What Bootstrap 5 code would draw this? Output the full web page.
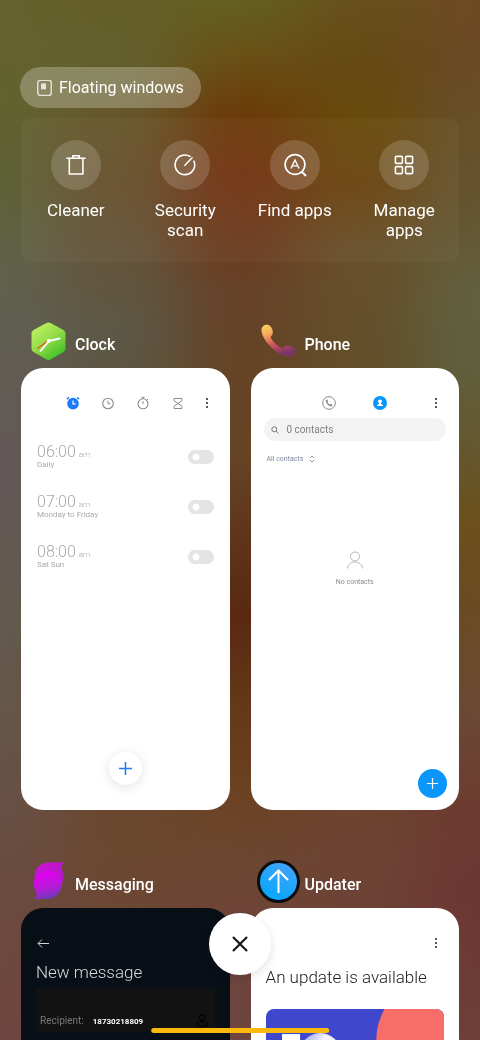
<!DOCTYPE html>
<html lang="en">
<head>
<meta charset="utf-8">
<meta name="viewport" content="width=device-width, initial-scale=1">
<title>Recent apps</title>
<link href="https://cdn.jsdelivr.net/npm/bootstrap@5.3.0/dist/css/bootstrap.min.css" rel="stylesheet">
<style>
  body { font-family: Roboto, "Noto Sans", sans-serif; background: #67503a; }
  button { font-family: inherit; }
  svg { display: block; flex: none; }

  /* Wallpaper: five vertical colour runs, each fading in over the one to its left */
  .wall { z-index: -1; }
  .wall-1 { background: linear-gradient(#66622d 0, #62632f 10%, #5f6236 17%, #60624b 26%, #625e54 34%, #64595a 45%, #635b50 58%, #65574a 68%, #685044 78%, #6b4a40 87%, #6f463f); }
  .wall-2 { background: linear-gradient(#645f28 0, #63602e 7%, #67552a 12%, #68502e 18%, #64543c 25%, #5c5845 32%, #67482c 60%, #6b4830 82%, #6e4540); }
  .wall-3 { background: linear-gradient(#645f21 0, #695218 5%, #6c3b0a 11%, #733412 17%, #6e3a1b 22%, #66422a 28%, #654426 36%, #664425 44%, #5f341a 52%, #5a2812 59%, #643818 68%, #6b4222 76%, #6c4630 82%, #6f443b 90%, #6e4540); }
  .wall-4 { background: linear-gradient(#68501c 0, #654a14 6%, #684a0c 12%, #6a4511 18%, #68502a 24%, #644f2a 33%, #6a4423 65%, #6d4434 82%, #6e3d36); }
  .wall-5 { background: linear-gradient(#6e4a23 0, #6a4a25 6%, #675028 12%, #655531 20%, #626040 28%, #5f6040 34%, #65582f 43%, #6b501c 50%, #6a4c22 58%, #6a4a35 68%, #6d3a30 78%, #6d3733 86%, #6d3f39); }
  .wall-2 { --from: 0%; }
  .wall-3 { --from: 25%; }
  .wall-4 { --from: 50%; }
  .wall-5 { --from: 75%; }
  .wall-fade {
    --fade: linear-gradient(90deg, transparent var(--from), rgba(0,0,0,.1) calc(var(--from) + 5%), rgba(0,0,0,.35) calc(var(--from) + 10%), rgba(0,0,0,.65) calc(var(--from) + 15%), rgba(0,0,0,.9) calc(var(--from) + 20%), #000 calc(var(--from) + 25%));
    -webkit-mask-image: var(--fade); mask-image: var(--fade);
  }

  .recents { padding: 67px 21px 0; }
  .pill { height: 41px; margin-left: -1px; padding: 1px 17px 0; gap: 7px; background: rgba(255,255,255,.25); color: #fff; font-size: 16px; line-height: 20px; }
  .tools { margin-top: 10px; padding: 22px 0; border-radius: 10px; background: rgba(255,255,255,.035); }
  .tool { color: #fff; font-size: 17px; line-height: 20px; gap: 10px; min-height: 100px; }
  .disc { width: 50px; height: 50px; background: rgba(255,255,255,.16); }
  .tool-name { max-width: 80px; }

  .apps { display: grid; grid-template-columns: 1fr 1fr; column-gap: 21px; row-gap: 49px; margin-top: 57px; }
  .app-head { height: 44px; margin-bottom: 5px; padding-left: 6px; gap: 4px; }
  .app-title { margin: 0; padding-top: 8px; font-size: 16px; line-height: 20px; font-weight: 500; color: #fff; }
  .shot { aspect-ratio: 33 / 70; border-radius: 22px; background: #fff; overflow: hidden; }
  .shot-bar { padding: 25px 12px 0 0; }
  .tab-btn { height: 20px; }
  .tab-clock { width: 35px; }
  .tab-phone { width: 51px; }
  .more { width: 22px; height: 20px; }
  .more-gap { margin-left: 20px; }

  .alarms { margin: 19px 16px 0; }
  .alarm { height: 50px; color: #a9a9a9; }
  .alarm-time { font-size: 16px; line-height: 16px; font-weight: 300; }
  .tiny { font-size: 8px; line-height: 10px; }
  .am { margin-left: 1px; }
  .toggle { appearance: none; width: 26px; height: 14px; margin: 0; border-radius: 7px; background: #e4e4e4 radial-gradient(circle at 8px 7px, #fff 3px, transparent 4px); }
  .fab { width: 33px; height: 33px; background: #fff; }
  .fab-clock { margin-bottom: 25px; box-shadow: 0 2px 12px rgba(0,0,0,.12); }
  .fab-phone { width: 29px; height: 29px; margin: 0 12px 12px 0; background: #0b96fb; }

  .search { height: 23px; margin: 5px 13px 0; padding: 1px 7px 0; gap: 8px; background: #f3f3f3; }
  .search input { font-size: 10px; line-height: 12px; color: #777; outline: 0; }
  .search input::placeholder { color: #808080; opacity: 1; }
  .filter { margin: 13px 0 0 16px; gap: 6px; font-size: 7px; line-height: 10px; color: #8288a0; }
  .empty { margin-top: 87px; gap: 8px; font-size: 7px; line-height: 10px; color: #8a8a8a; }

  .shot-dark { background: #080f17; color: #d8dadc; }
  .back { margin: 29px 0 0 16px; }
  .page-name { margin: 11px 0 0 15px; font-size: 17px; line-height: 22px; font-weight: 300; }
  .message { height: 43px; margin: 6px 15px 0; padding: 0 7px 5px 4px; gap: 9px; background: #121212; font-size: 10px; line-height: 12px; color: #777; }
  .message input { font-size: 8px; line-height: 10px; font-weight: 700; color: #fff; outline: 0; }
  .update-name { margin-top: 13px; color: #222; }
  .banner { margin: 21px 15px 0; border-radius: 8px; }
  .banner svg { width: 100%; height: auto; }

  .close-all { bottom: 65px; width: 62px; height: 62px; background: #fff; box-shadow: 0 3px 10px rgba(0,0,0,.12); }
  .home-bar { bottom: 7px; width: 37%; height: 5px; background: #fbb90d; }
</style>
<script src="https://cdn.jsdelivr.net/npm/bootstrap@5.3.0/dist/js/bootstrap.bundle.min.js"></script>
</head>
<body class="vh-100 overflow-hidden">
<div class="wall wall-1 position-fixed top-0 start-0 w-100 h-100"></div>
<div class="wall wall-fade wall-2 position-fixed top-0 start-0 w-100 h-100"></div>
<div class="wall wall-fade wall-3 position-fixed top-0 start-0 w-100 h-100"></div>
<div class="wall wall-fade wall-4 position-fixed top-0 start-0 w-100 h-100"></div>
<div class="wall wall-fade wall-5 position-fixed top-0 start-0 w-100 h-100"></div>

<main class="recents">
  <button type="button" class="pill border-0 rounded-pill d-inline-flex align-items-center">
    <svg width="15" height="17" viewBox="0 0 15 17" fill="none" stroke="#e6e4da" stroke-width="1.4"><rect x=".8" y=".2" width="13.400" height="15.200" rx="2.5"/><rect x="4" y="3.400" width="5" height="6" fill="#e6e4da" stroke="none"/></svg>
    Floating windows
  </button>

  <section class="tools row g-0">
    <div class="col-3"><button type="button" class="tool w-100 p-0 border-0 bg-transparent d-flex flex-column align-items-center">
      <span class="disc rounded-circle d-flex align-items-center justify-content-center"><svg width="26" height="26" viewBox="0 0 26 26" fill="none" stroke="#fff" stroke-width="1.6"><path d="M4 6.300h18M6.300 6.500v15.500h13.600V6.500M9.900 6V3.700h6.400V6" stroke-linejoin="round" stroke-linecap="round"/></svg></span>
      <span class="tool-name">Cleaner</span></button></div>
    <div class="col-3"><button type="button" class="tool w-100 p-0 border-0 bg-transparent d-flex flex-column align-items-center">
      <span class="disc rounded-circle d-flex align-items-center justify-content-center"><svg width="26" height="26" viewBox="0 0 26 26" fill="none" stroke="#fff" stroke-width="1.600" stroke-linecap="round"><path d="M22 9.200A9.800 9.800 0 1 1 17.900 4.400M12.900 13.300l7.200-7.500"/></svg></span>
      <span class="tool-name">Security scan</span></button></div>
    <div class="col-3"><button type="button" class="tool w-100 p-0 border-0 bg-transparent d-flex flex-column align-items-center">
      <span class="disc rounded-circle d-flex align-items-center justify-content-center"><svg width="26" height="26" viewBox="0 0 26 26" fill="none" stroke="#fff" stroke-width="1.700"><circle cx="13" cy="12.500" r="9.900"/><path d="M19.500 19.500l4.500 4.500" stroke-width="2"/><path d="M8.900 16.500L13 8l4.100 8.500M10.200 13.900h5.600" stroke-width="1.400"/></svg></span>
      <span class="text-nowrap">Find apps</span></button></div>
    <div class="col-3"><button type="button" class="tool w-100 p-0 border-0 bg-transparent d-flex flex-column align-items-center">
      <span class="disc rounded-circle d-flex align-items-center justify-content-center"><svg width="26" height="26" viewBox="0 0 26 26" fill="none" stroke="#fff" stroke-width="1.600"><rect x="4.400" y="4.400" width="7" height="7" rx="1"/><rect x="14.600" y="4.400" width="7" height="7" rx="1"/><rect x="4.400" y="14.600" width="7" height="7" rx="1"/><rect x="14.600" y="14.600" width="7" height="7" rx="1"/></svg></span>
      <span class="tool-name">Manage apps</span></button></div>
  </section>

  <section class="apps">
    <article>
      <header class="app-head d-flex align-items-center">
        <svg width="44" height="44" viewBox="0 0 44 44"><defs><linearGradient id="gc" x1=".1" y1="0" x2=".8" y2="1"><stop offset="0" stop-color="#c8f46a"/><stop offset=".5" stop-color="#93dc48"/><stop offset="1" stop-color="#37bd22"/></linearGradient></defs><path d="M19.500 4q2-1.200 4 0l13 7q2 1.200 2 3.300v15.400q0 2.100-2 3.300l-13 7.400q-2 1.200-4 0l-13-7.400q-2-1.200-2-3.300V14.300q0-2.100 2-3.300z" fill="url(#gc)"/><path d="M21.500 21.500l-11 8" stroke="#f0502c" stroke-width="1.300"/><path d="M22 22l-8.500 10M22 22l10.500-2.500" stroke="#fff" stroke-width="1.900" stroke-linecap="round"/><circle cx="21.700" cy="22" r="1.900" fill="#fff"/></svg>
        <h2 class="app-title">Clock</h2>
      </header>
      <div class="shot d-flex flex-column">
        <nav class="shot-bar d-flex justify-content-end">
          <button type="button" aria-label="Alarm" class="tab-btn tab-clock p-0 border-0 bg-transparent d-flex align-items-center justify-content-center"><svg width="14" height="14" viewBox="0 0 14 14"><circle cx="7" cy="7.600" r="5.800" fill="#1a7af8"/><path d="M.9 3.200l2-2M13.100 3.200l-2-2" stroke="#1a7af8" stroke-width="1.300"/><path d="M7 4.500v3.300h2.700" fill="none" stroke="#fff" stroke-width="1.200"/></svg></button>
          <button type="button" aria-label="World clock" class="tab-btn tab-clock p-0 border-0 bg-transparent d-flex align-items-center justify-content-center"><svg width="14" height="14" viewBox="0 0 14 14" fill="none" stroke="#8c8c8c"><circle cx="7" cy="7.500" r="5.300" stroke-width="1.100"/><path d="M7 4.700v3h2.500"/></svg></button>
          <button type="button" aria-label="Stopwatch" class="tab-btn tab-clock p-0 border-0 bg-transparent d-flex align-items-center justify-content-center"><svg width="14" height="14" viewBox="0 0 14 14" fill="none" stroke="#8c8c8c"><circle cx="7" cy="7.800" r="5" stroke-width="1.100"/><path d="M7 5v3M5.500 1.400h3M11 3l1 1M7 1.400v1.400"/></svg></button>
          <button type="button" aria-label="Timer" class="tab-btn tab-clock p-0 border-0 bg-transparent d-flex align-items-center justify-content-center"><svg width="14" height="14" viewBox="0 0 14 14" fill="none" stroke="#8c8c8c"><path d="M3 2.500h8v2.200L3 10.300v2.200h8v-2.200L3 4.700z" stroke-linejoin="round"/></svg></button>
          <button type="button" aria-label="More" class="more p-0 border-0 bg-transparent d-flex align-items-center justify-content-center"><svg width="4" height="12" viewBox="0 0 4 12" fill="#222"><circle cx="2" cy="2" r="1"/><circle cx="2" cy="6" r="1"/><circle cx="2" cy="10" r="1"/></svg></button>
        </nav>
        <div class="alarms">
          <label class="alarm d-flex align-items-center justify-content-between"><span><span class="alarm-time d-block">06:00<span class="tiny am"> am</span></span><span class="tiny d-block">Daily</span></span><input type="checkbox" class="toggle"></label>
          <label class="alarm d-flex align-items-center justify-content-between"><span><span class="alarm-time d-block">07:00<span class="tiny am"> am</span></span><span class="tiny d-block">Monday to Friday</span></span><input type="checkbox" class="toggle"></label>
          <label class="alarm d-flex align-items-center justify-content-between"><span><span class="alarm-time d-block">08:00<span class="tiny am"> am</span></span><span class="tiny d-block">Sat Sun</span></span><input type="checkbox" class="toggle"></label>
        </div>
        <button type="button" aria-label="Add alarm" class="fab fab-clock mt-auto align-self-center p-0 border-0 rounded-circle d-flex align-items-center justify-content-center"><svg width="13" height="13" viewBox="0 0 13 13" stroke="#1a7af8" stroke-width="1.500"><path d="M6.500 0v13M0 6.500h13"/></svg></button>
      </div>
    </article>

    <article>
      <header class="app-head d-flex align-items-center">
        <svg width="44" height="44" viewBox="0 0 44 44"><defs><linearGradient id="gp" x1="0" y1="0" x2=".35" y2="1"><stop offset="0" stop-color="#fcd860"/><stop offset=".35" stop-color="#f2a45c"/><stop offset=".65" stop-color="#cf5560"/><stop offset="1" stop-color="#7d3568"/></linearGradient></defs><path d="M4.500 11C4.500 7.500 7.500 5.500 10.500 5.800c3.500.5 5.500 4.500 5.300 8.400-.1 1.800-1.600 2.300-2 3.600-.5 2.700 7.300 10.200 11.200 11.200 1.700.4 2.400-1.800 4-2.300 2.600-.8 7 1 9.300 3.200.9 1 .6 3-.3 4.400-1.700 2.300-5.800 3.600-9.200 3C19.500 35.500 4.500 21 4.500 11z" fill="url(#gp)"/></svg>
        <h2 class="app-title">Phone</h2>
      </header>
      <div class="shot d-flex flex-column">
        <nav class="shot-bar d-flex justify-content-end">
          <button type="button" aria-label="Recents" class="tab-btn tab-phone p-0 border-0 bg-transparent d-flex align-items-center justify-content-center"><svg width="14" height="14" viewBox="0 0 14 14"><circle cx="7" cy="7" r="6.300" fill="none" stroke="#888"/><path d="M3.800 4.400c.3-.9 1.300-1.200 1.800-.4.5.9.2 1.400-.1 1.900.4 1.200 1.400 2.100 2.500 2.600.6-.4 1.300-.6 2 0 .8.700.3 1.500-.5 1.800C7 10.500 3.700 7 3.800 4.400z" fill="#888"/></svg></button>
          <button type="button" aria-label="Contacts" class="tab-btn tab-phone p-0 border-0 bg-transparent d-flex align-items-center justify-content-center"><svg width="14" height="14" viewBox="0 0 14 14"><circle cx="7" cy="7" r="7" fill="#0b96fb"/><path d="M7 3.400c1.200 0 1.900.8 1.900 1.800 0 .9-.5 1.500-.9 1.900v.8c1 .3 2 .7 2 2H4c0-1.300 1-1.700 2-2v-.8c-.4-.4-.9-1-.9-1.900 0-1 .7-1.800 1.900-1.800z" fill="#fff"/></svg></button>
          <button type="button" aria-label="More" class="more more-gap p-0 border-0 bg-transparent d-flex align-items-center justify-content-center"><svg width="4" height="12" viewBox="0 0 4 12" fill="#222"><circle cx="2" cy="2" r="1"/><circle cx="2" cy="6" r="1"/><circle cx="2" cy="10" r="1"/></svg></button>
        </nav>
        <div class="search rounded-pill d-flex align-items-center">
          <svg width="8" height="8" viewBox="0 0 8 8" fill="none" stroke="#777"><circle cx="3.300" cy="3.300" r="2.500"/><path d="M5.200 5.200l2.400 2.400"/></svg>
          <input type="search" aria-label="Search contacts" placeholder="0 contacts" class="p-0 border-0 bg-transparent flex-fill">
        </div>
        <button type="button" class="filter p-0 border-0 bg-transparent align-self-start d-flex align-items-center">All contacts <svg width="6" height="8" viewBox="0 0 6 8" fill="none" stroke="#8288a0" stroke-width=".9"><path d="M1 3l2-2 2 2M1 5l2 2 2-2"/></svg></button>
        <div class="empty d-flex flex-column align-items-center">
          <svg width="18" height="18" viewBox="0 0 18 18" fill="none" stroke="#b5b5b5"><circle cx="9" cy="5.500" r="4.500"/><path d="M1.500 17.500c.3-4 3.500-6.500 7.500-6.500s7.200 2.500 7.500 6.500"/></svg>
          No contacts
        </div>
        <button type="button" aria-label="Add contact" class="fab fab-phone mt-auto align-self-end p-0 border-0 rounded-circle d-flex align-items-center justify-content-center"><svg width="11" height="11" viewBox="0 0 11 11" stroke="#fff" stroke-width="1.200"><path d="M5.500 0v11M0 5.500h11"/></svg></button>
      </div>
    </article>

    <article>
      <header class="app-head d-flex align-items-center">
        <svg width="44" height="44" viewBox="0 0 44 44"><defs><linearGradient id="gm" x1=".3" y1="0" x2=".6" y2="1"><stop offset="0" stop-color="#d010d8"/><stop offset="1" stop-color="#9a22b4"/></linearGradient><linearGradient id="gn" x1=".4" y1=".1" x2=".65" y2="1"><stop offset="0" stop-color="#e000f0"/><stop offset=".5" stop-color="#b81ad8"/><stop offset="1" stop-color="#6a3cb4"/></linearGradient></defs><path d="M37 3.500H22C12 4 7.500 10 7.500 18s5 15 13 15 16.500-7 16.500-16c0-4-2.500-6-2.500-8.500 0-2 1-3.500 2.500-5z" fill="url(#gm)"/><path d="M7 40h14c8.500-.5 14-8 14-15.500C35 17 29 12 21.500 12S6.500 18 6.500 25c0 4.500 3 7 3 10 0 2-1 3.500-2.500 5z" fill="url(#gn)"/></svg>
        <h2 class="app-title">Messaging</h2>
      </header>
      <div class="shot shot-dark d-flex flex-column">
        <button type="button" aria-label="Back" class="back p-0 border-0 bg-transparent align-self-start"><svg width="13" height="13" viewBox="0 0 13 13" fill="none" stroke="#d0d2d4"><path d="M12 6.500H1.200M5 2.500l-4 4 4 4"/></svg></button>
        <h3 class="page-name">New message</h3>
        <div class="message d-flex align-items-end">
          <label for="to">Recipient:</label>
          <input id="to" type="text" value="18730218809" class="p-0 border-0 bg-transparent flex-fill w-25">
          <svg width="12" height="13" viewBox="0 0 12 13" fill="none" stroke="#000" stroke-width="1.200"><circle cx="6" cy="3.600" r="2.800"/><rect x=".8" y="8" width="10.400" height="4" rx="2"/></svg>
        </div>
      </div>
    </article>

    <article>
      <header class="app-head d-flex align-items-center">
        <svg width="44" height="44" viewBox="0 0 44 44"><defs><linearGradient id="gu" x1=".8" y1="0" x2=".3" y2="1"><stop offset="0" stop-color="#46a4f8"/><stop offset="1" stop-color="#02a8fc"/></linearGradient></defs><circle cx="21.500" cy="22.500" r="20" fill="url(#gu)" stroke="#0c0d10" stroke-width="3"/><path d="M21.500 34V12M12 21l9.500-9.500L31 21" fill="none" stroke="#fff" stroke-width="2"/></svg>
        <h2 class="app-title">Updater</h2>
      </header>
      <div class="shot d-flex flex-column">
        <nav class="shot-bar d-flex justify-content-end">
          <button type="button" aria-label="More" class="more p-0 border-0 bg-transparent d-flex align-items-center justify-content-center"><svg width="4" height="12" viewBox="0 0 4 12" fill="#222"><circle cx="2" cy="2" r="1"/><circle cx="2" cy="6" r="1"/><circle cx="2" cy="10" r="1"/></svg></button>
        </nav>
        <h3 class="page-name update-name">An update is available</h3>
        <div class="banner overflow-hidden">
          <svg viewBox="0 0 178 100"><defs><linearGradient id="gb" x1="0" y1="0" x2="1" y2=".6"><stop offset="0" stop-color="#8a90e8"/><stop offset=".5" stop-color="#f4f4fe"/><stop offset="1" stop-color="#dfe0fa"/></linearGradient></defs><rect width="178" height="100" fill="#3f47cc"/><circle cx="172" cy="31" r="62" fill="#f76e69"/><rect x="16" y="25" width="18" height="60" fill="#fff"/><circle cx="54" cy="45" r="21" fill="url(#gb)"/></svg>
        </div>
      </div>
    </article>
  </section>
</main>

<button type="button" aria-label="Close all" class="close-all position-fixed start-50 translate-middle-x p-0 border-0 rounded-circle d-flex align-items-center justify-content-center"><svg width="16" height="16" viewBox="0 0 16 16" stroke="#111" stroke-width="2" stroke-linecap="round"><path d="M1.500 1.500l13 13M14.500 1.500l-13 13"/></svg></button>
<div class="home-bar position-fixed start-50 translate-middle-x rounded-pill"></div>
</body>
</html>
